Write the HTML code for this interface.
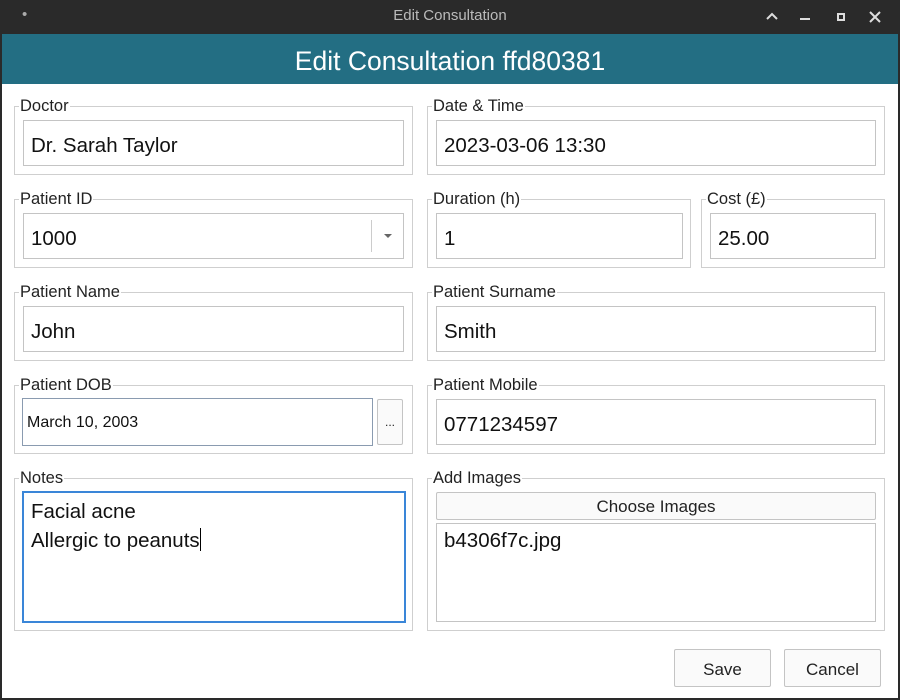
<!DOCTYPE html>
<html><head><style>
*{box-sizing:border-box;margin:0;padding:0}
body{width:900px;height:700px;background:#2a2a2a;font-family:"Liberation Sans",sans-serif;position:relative;overflow:hidden}
.win{position:absolute;left:2px;top:34px;width:896px;height:664px;background:#fff}
.tb{position:absolute;left:0;top:0;width:900px;height:34px;background:#2a2a2a;color:#bbb;font-size:15px;text-align:center;line-height:31px}
.hd{position:absolute;left:2px;top:34px;width:896px;height:50px;background:#236e83;color:#fff;font-size:26.5px;text-align:center;line-height:54px}
.g{position:absolute;border:1px solid #cfcfcf}
.l{position:absolute;background:#fff;font-size:16.5px;color:#222;padding:0 1px;top:-10px;left:4px;line-height:18px}
.i{position:absolute;border:1px solid #c4c4c4;background:#fff;font-size:20.5px;color:#111;padding-left:7px;padding-top:5px;display:flex;align-items:center}
.b{position:absolute;border:1px solid #c4c4c4;background:#fafafa;font-size:17px;color:#222;display:flex;align-items:center;justify-content:center;border-radius:2px}
</style></head><body>
<div class="tb">Edit Consultation
<span style="position:absolute;left:22px;top:-1px;color:#aaa">•</span>
<svg style="position:absolute;left:766px;top:12px" width="12" height="9"><path d="M1 7 L6 2 L11 7" stroke="#ddd" stroke-width="2" fill="none"/></svg>
<span style="position:absolute;left:800px;top:6px;width:10px;height:2px;background:#ddd;margin-top:12px"></span>
<span style="position:absolute;left:837px;top:13px;width:8px;height:8px;border:2px solid #ddd"></span>
<svg style="position:absolute;left:869px;top:11px" width="12" height="12"><path d="M1 1 L11 11 M11 1 L1 11" stroke="#ddd" stroke-width="2"/></svg>
</div>
<div class="win"></div>
<div class="hd">Edit Consultation ffd80381</div>

<div class="g" style="left:14px;top:106px;width:399px;height:69px"><span class="l">Doctor</span></div>
<div class="i" style="left:23px;top:120px;width:381px;height:46px">Dr. Sarah Taylor</div>
<div class="g" style="left:427px;top:106px;width:458px;height:69px"><span class="l">Date &amp; Time</span></div>
<div class="i" style="left:436px;top:120px;width:440px;height:46px">2023-03-06 13:30</div>

<div class="g" style="left:14px;top:199px;width:399px;height:69px"><span class="l">Patient ID</span></div>
<div class="i" style="left:23px;top:213px;width:381px;height:46px">1000
<span style="position:absolute;left:347px;top:6px;width:1px;height:32px;background:#ccc"></span>
<span style="position:absolute;left:360px;top:20px;border-left:4px solid transparent;border-right:4px solid transparent;border-top:4px solid #666"></span></div>
<div class="g" style="left:427px;top:199px;width:264px;height:69px"><span class="l">Duration (h)</span></div>
<div class="i" style="left:436px;top:213px;width:247px;height:46px">1</div>
<div class="g" style="left:701px;top:199px;width:184px;height:69px"><span class="l">Cost (£)</span></div>
<div class="i" style="left:710px;top:213px;width:166px;height:46px">25.00</div>

<div class="g" style="left:14px;top:292px;width:399px;height:69px"><span class="l">Patient Name</span></div>
<div class="i" style="left:23px;top:306px;width:381px;height:46px">John</div>
<div class="g" style="left:427px;top:292px;width:458px;height:69px"><span class="l">Patient Surname</span></div>
<div class="i" style="left:436px;top:306px;width:440px;height:46px">Smith</div>

<div class="g" style="left:14px;top:385px;width:399px;height:69px"><span class="l">Patient DOB</span></div>
<div class="i" style="left:22px;top:398px;width:351px;height:48px;border-color:#8a9bb0;font-size:16px;padding-left:4px;padding-top:2px">March 10, 2003</div>
<div class="b" style="left:377px;top:399px;width:26px;height:46px;font-size:12px">...</div>
<div class="g" style="left:427px;top:385px;width:458px;height:69px"><span class="l">Patient Mobile</span></div>
<div class="i" style="left:436px;top:399px;width:440px;height:46px">0771234597</div>

<div class="g" style="left:14px;top:478px;width:399px;height:153px"><span class="l">Notes</span></div>
<div class="i" style="left:22px;top:491px;width:384px;height:132px;border:2px solid #3a86d8;display:block;padding:4px 0 0 7px;line-height:29px">Facial acne<br>Allergic to peanuts<span style="display:inline-block;width:1px;height:23px;background:#000;vertical-align:-4px"></span></div>
<div class="g" style="left:427px;top:478px;width:458px;height:153px"><span class="l">Add Images</span></div>
<div class="b" style="left:436px;top:492px;width:440px;height:28px;padding-top:2px">Choose Images</div>
<div class="i" style="left:436px;top:523px;width:440px;height:99px;display:block;padding-top:5px">b4306f7c.jpg</div>

<div class="b" style="left:674px;top:649px;width:97px;height:38px;padding-top:3px">Save</div>
<div class="b" style="left:784px;top:649px;width:97px;height:38px;padding-top:3px">Cancel</div>
</body></html>
